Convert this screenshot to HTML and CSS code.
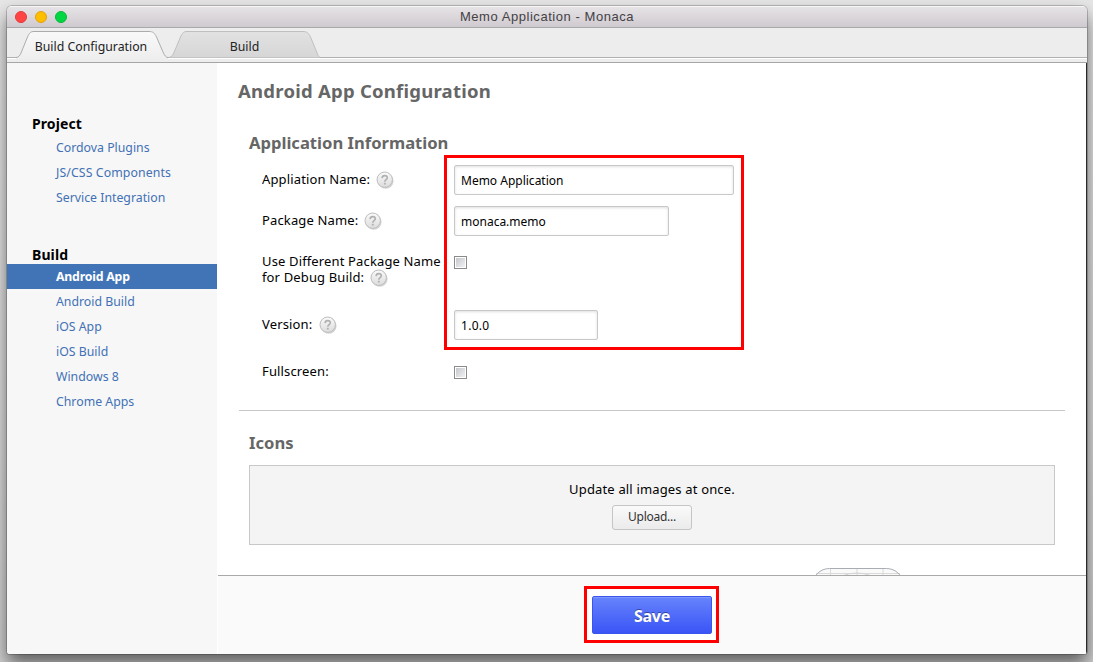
FILE: index.html
```html
<!DOCTYPE html>
<html lang="en">
<head>
<meta charset="utf-8">
<title>Memo Application - Monaca</title>
<link rel="stylesheet" href="styles.css">
</head>
<body>
<svg width="0" height="0" class="defs">
  <defs>
    <linearGradient id="help-fill" x1="0" y1="0" x2="0" y2="1"><stop offset="0" stop-color="#fafafa"/><stop offset="1" stop-color="#dcdcdc"/></linearGradient>
    <linearGradient id="tab-on" x1="0" y1="0" x2="0" y2="1"><stop offset="0" stop-color="#f9f9f9"/><stop offset="1" stop-color="#eeeeee"/></linearGradient>
    <linearGradient id="tab-off" x1="0" y1="0" x2="0" y2="1"><stop offset="0" stop-color="#e2e2e2"/><stop offset="1" stop-color="#d6d6d6"/></linearGradient>
    <symbol id="help" viewBox="0 0 18 18">
      <circle cx="9.8" cy="9.9" r="7.8" fill="#000" opacity=".17"/>
      <circle cx="8.7" cy="8.7" r="7.7" fill="url(#help-fill)" stroke="#bcbcbc"/>
      <path d="M6.100 7.100C6.200 5.400 7.300 4.600 8.700 4.600c1.500 0 2.600.8 2.600 2.100 0 1.900-2.500 1.800-2.500 4" fill="none" stroke="#b0b0b0" stroke-width="1.600"/>
      <rect x="7.9" y="11.8" width="1.8" height="1.7" fill="#b0b0b0"/>
    </symbol>
  </defs>
</svg>
<div class="window">
  <header class="titlebar">
    <div class="lights"><i class="light red"></i><i class="light amber"></i><i class="light green"></i></div>
    <h1 class="title"><span>Memo Application - Monaca</span></h1>
  </header>
  <nav class="tabs">
    <a class="tab tab-active">
      <svg class="tab-shape" width="152" height="31" viewBox="0 0 152 31"><path d="M0 29.500C3 29.500 4 27 5 25L11.500 9C13.500 4.500 15 3.500 18 3.500H133C137 3.500 138.500 5 140.500 9L147 24C148.500 27.500 150 29.500 152 29.500V31H0Z" fill="url(#tab-on)"/><path d="M0 29.500C3 29.500 4 27 5 25L11.500 9C13.500 4.500 15 3.500 18 3.500H133C137 3.500 138.500 5 140.500 9L147 24C148.500 27.500 150 29.500 152 29.500" fill="none" stroke="#acacac"/></svg>
      <span>Build Configuration</span>
    </a>
    <a class="tab tab-idle">
      <svg class="tab-shape" width="152" height="31" viewBox="0 0 152 31"><path d="M0 29.500C3 29 4 26.500 5 24.500L11.500 9C13.500 4.500 15 3.500 18 3.500H134C138 3.500 139.500 5 141.500 9L148.500 26C149.300 28 150 29 151 29.500Z" fill="url(#tab-off)"/><path d="M0 29.500C3 29 4 26.500 5 24.500L11.500 9C13.500 4.500 15 3.500 18 3.500H134C138 3.500 139.500 5 141.500 9L148.500 26C149.300 28 150 29 151 29.500" fill="none" stroke="#bfbfbf"/></svg>
      <span>Build</span>
    </a>
  </nav>
  <div class="tab-base"></div>
  <div class="body">
    <aside class="sidebar">
      <h2 class="side-head">Project</h2>
      <ul class="side-list project">
        <li><span>Cordova Plugins</span></li>
        <li class="loose"><span>JS/CSS Components</span></li>
        <li><span>Service Integration</span></li>
      </ul>
      <h2 class="side-head side-head-build">Build</h2>
      <ul class="side-list">
        <li class="current"><span>Android App</span></li>
        <li><span>Android Build</span></li>
        <li><span>iOS App</span></li>
        <li><span>iOS Build</span></li>
        <li><span>Windows 8</span></li>
        <li><span>Chrome Apps</span></li>
      </ul>
    </aside>
    <main class="main">
      <div class="scroll">
        <h2 class="page-head">Android App Configuration</h2>
        <h3 class="section-head">Application Information</h3>
        <form class="form">
          <div class="row"><label>Appliation Name: <svg class="help"><use href="#help"/></svg></label><input class="field wide" type="text" value="Memo Application"></div>
          <div class="row"><label>Package Name: <svg class="help"><use href="#help"/></svg></label><input class="field mid" type="text" value="monaca.memo"></div>
          <div class="row row-debug"><label>Use Different Package Name<br>for Debug Build: <svg class="help"><use href="#help"/></svg></label><input class="check" type="checkbox"></div>
          <div class="row row-version"><label>Version: <svg class="help"><use href="#help"/></svg></label><input class="field short" type="text" value="1.0.0"></div>
          <div class="row row-full"><label>Fullscreen:</label><input class="check" type="checkbox"></div>
          <div class="mark mark-form"></div>
        </form>
        <hr class="rule">
        <h3 class="section-head icons-head">Icons</h3>
        <div class="upload-box">
          <p class="upload-text">Update all images at once.</p>
          <button class="upload" type="button">Upload...</button>
        </div>
        <svg class="template" width="92" height="92" viewBox="0 0 92 92"><rect x=".5" y=".5" width="91" height="91" rx="17" fill="#fafafa"/><path d="M4 5.500H88M18.500 0V92M45 0V92M71 0V92" stroke="#dadada" fill="none"/><ellipse cx="45" cy="42" rx="38" ry="37" fill="none" stroke="#d4d4d4"/><rect x=".5" y=".5" width="91" height="91" rx="17" fill="none" stroke="#a9adb3"/></svg>
      </div>
      <footer class="footer">
        <div class="mark-save"><button class="save" type="button">Save</button></div>
      </footer>
    </main>
  </div>
</div>
</body>
</html>
```
FILE: styles.css
```css
* { box-sizing: border-box; }
body { margin: 0; width: 1093px; height: 662px; overflow: hidden; padding: 6px 6px 8px 7px; background: linear-gradient(#e6e6e6, #dcdcdc 60%, #d0d0d0); font: 13px/16px "Noto Sans", sans-serif; color: #111; }
.defs { position: absolute; }
h1, h2, h3, ul, p { margin: 0; padding: 0; }
ul { list-style: none; }

.window { height: 648px; display: flex; flex-direction: column; border-radius: 5px 5px 3px 3px; background: #fff; box-shadow: 0 0 0 1px rgba(0,0,0,.2), 0 10px 18px rgba(0,0,0,.55); overflow: hidden; }
.titlebar { height: 22px; flex: none; display: flex; align-items: center; background: linear-gradient(#e6e3e6, #cfcacf); border-top: 1px solid #f6f6f6; border-bottom: 1px solid #a9a9a9; }
.lights { display: flex; gap: 8px; padding-left: 8px; width: 80px; }
.light { width: 12px; height: 12px; border-radius: 50%; }
.red { background: #ff4443; border: 1px solid #e4393a; }
.amber { background: #ffbe00; border: 1px solid #e0a010; }
.green { background: #00d742; border: 1px solid #0bb53a; }
.title { flex: 1; text-align: center; padding: 0 80px 0 0; font: 13px/20px "Liberation Sans", Arial, sans-serif; color: #454145; letter-spacing: .55px; }

.tabs { height: 30px; flex: none; display: flex; gap: 1px; padding-left: 9px; background: #ededed; border-bottom: 1px solid #b0b0b0; }
.tab { position: relative; height: 30px; line-height: 38px; text-align: center; color: #222; font-size: 12.300px; }
.tab-active { width: 152px; padding-right: 2px; z-index: 1; }
.tab-idle { width: 152px; }
.tab-idle span { padding-right: 1px; }
.tab span { position: relative; }
.tab-shape { position: absolute; left: 0; top: 0; }
.tab-base { height: 5px; flex: none; background: #ededed; border-top: 1px solid #fff; border-bottom: 1px solid #a6a6a6; }

.body { flex: 1; min-height: 0; display: flex; }
.sidebar { width: 210px; flex: none; background: #f7f7f7; padding-top: 50px; }
.side-head { padding-left: 25px; font-size: 14px; line-height: 22px; font-weight: bold; color: #000; letter-spacing: .1px; }
.side-head-build { line-height: 18px; }
.side-list li { height: 25px; line-height: 25px; padding-left: 49px; color: #4271b5; font-size: 12.300px; }
.side-list .loose { letter-spacing: .1px; }
.side-list.project { padding-bottom: 36px; }
.side-list .current { background: #4174b7; color: #fff; font-weight: bold; letter-spacing: -.2px; }

.main { flex: 1; min-width: 0; display: flex; flex-direction: column; padding-left: 1px; border-right: 1px solid #2a2a2a; }
.scroll { flex: 1; min-height: 0; overflow: hidden; padding-left: 20px; }
.page-head { padding-top: 15px; font-size: 18.500px; line-height: 25px; color: #666; letter-spacing: .24px; }
.section-head { padding: 30px 0 0 11px; font-size: 16.600px; line-height: 20px; color: #666; }
.form { position: relative; padding: 7px 0 0 24px; height: 257px; }
.row { display: flex; align-items: flex-start; height: 41px; padding-top: 5px; }
.row label { width: 192px; flex: none; padding-top: 6px; white-space: nowrap; color: #000; letter-spacing: .14px; }
.help { position: relative; top: -3px; width: 18px; height: 18px; margin: -3px 0 -3px 2px; vertical-align: -5px; }
.row-version .help { margin-left: 3px; }
.field { height: 30px; padding: 0 6px; border: 1px solid #c8c8c8; border-radius: 2px; background: #fff; box-shadow: inset 0 1px 3px rgba(0,0,0,.13); font: 12px "Noto Sans", sans-serif; color: #000; outline: 0; }
.wide { width: 280px; }
.mid { width: 215px; }
.short { width: 144px; letter-spacing: .3px; }
.row-debug { height: 63px; }
.row-version { height: 52px; }
.row-full { padding-top: 0; }
.check { appearance: none; width: 13px; height: 13px; margin: 9px 0 0; border: 1px solid #8a8a8a; background: linear-gradient(135deg, #bfc2c9, #f6f6f6); box-shadow: inset 0 0 0 1px #fff; background-clip: content-box; padding: 1px; }
.mark { position: absolute; border: 3px solid #f00; }
.mark-form { left: 206px; top: 2px; width: 300px; height: 195px; }
.rule { height: 1px; margin: 0 21px 0 1px; border: 0; background: #c6c6c6; }
.icons-head { padding-top: 22px; }
.upload-box { margin: 12px 31px 0 11px; height: 80px; border: 1px solid #c8c8c8; background: #f4f4f4; display: flex; flex-direction: column; align-items: center; }
.upload-text { padding-top: 15px; line-height: 16px; color: #000; letter-spacing: .16px; }
.upload { margin-top: 8px; width: 80px; height: 25px; padding: 0 0 2px; border: 1px solid #c5c5c5; border-radius: 3px; background: linear-gradient(#fafafa, #ebebeb); font: 12px "Noto Sans", sans-serif; letter-spacing: -.25px; color: #333; }
.template { display: block; margin: 23px 0 0 574px; }
.footer { height: 79px; flex: none; display: flex; justify-content: center; align-items: flex-start; padding: 10px 1px 0 0; border-top: 1px solid #a9a9a9; background: #fafafa; }
.mark-save { width: 135px; height: 57px; border: 3px solid #f00; padding: 7px 4px 6px 5px; background: #fff; }
.save { display: block; width: 120px; height: 38px; padding: 2px 0 0; border: 1px solid #3b56ee; border-radius: 2px; background: linear-gradient(#6683fc, #3a55f6); box-shadow: inset 0 1px 0 #7f98ff; font: bold 16px "Noto Sans", sans-serif; letter-spacing: -.3px; color: #fff; text-shadow: 0 -1px 0 rgba(0,0,0,.4); }
```
